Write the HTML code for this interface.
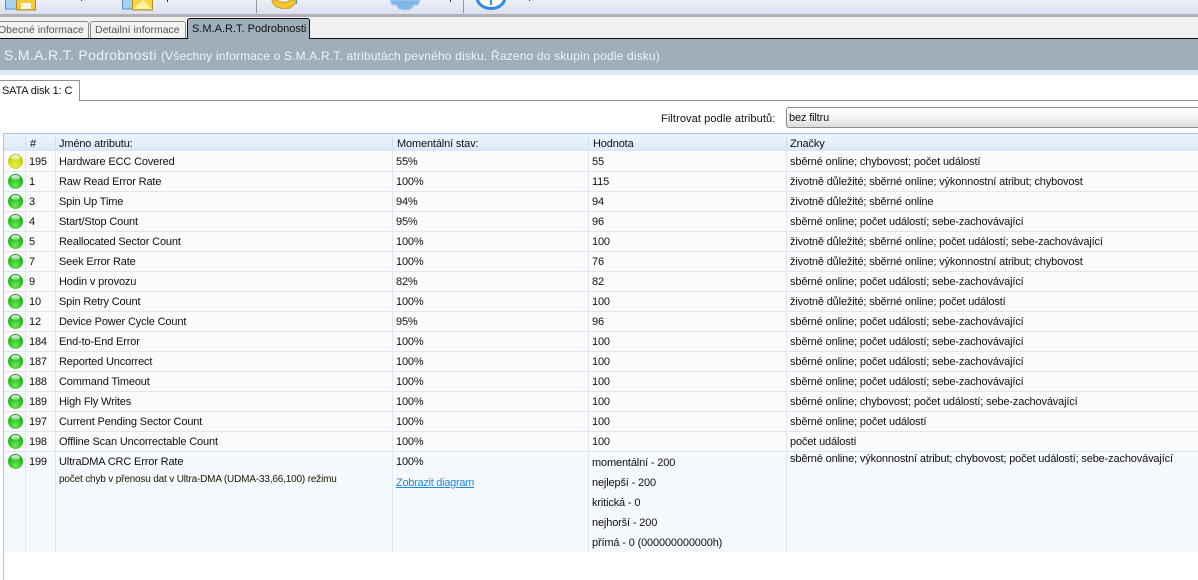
<!DOCTYPE html>
<html><head><meta charset="utf-8">
<style>
html,body{margin:0;padding:0;background:#fff}
#p{position:relative;width:1198px;height:580px;overflow:hidden;background:#fff;font-family:"Liberation Sans",sans-serif;font-size:11px;letter-spacing:-.15px;color:#111}
#p div,#p a,#p svg{position:absolute}
.t{white-space:nowrap;line-height:14px;margin-top:1px}
.r{left:4px;width:1194px;height:19px;margin-top:1px;background:#fbfbfb;border-bottom:1px solid #dde7f6}
.v{width:1px;background:#dde7f6}
.b{left:8px;width:15px;height:15px;margin-top:1px;border-radius:50%;background:radial-gradient(circle at 50% 75%,#6ce856 0%,#2cc024 50%,#159a16 80%,#108a12 100%)}
.b:after{content:"";position:absolute;left:3px;top:1px;width:9px;height:5px;border-radius:50%;background:linear-gradient(#e4f7e0,#7ad86c)}
.b.y{background:radial-gradient(circle at 50% 75%,#e6f040 0%,#ccd820 50%,#a8b414 100%)}
.b.y:after{background:linear-gradient(#f8f8dc,#dce468)}
</style></head><body><div id="p">
<div style="left:0;top:0;width:1198px;height:14px;background:linear-gradient(#eef0f8,#dbdff0)"></div>
<div style="left:0;top:14px;width:1198px;height:3px;background:#b3b1b6"></div>
<div style="left:0;top:17px;width:1198px;height:22px;background:#f0f0f0"></div>
<svg style="left:0;top:0" width="640" height="14" viewBox="0 0 640 14">
<rect x="5.5" y="-1" width="14" height="10" fill="#a8d2f2" stroke="#4f94d0"/>
<rect x="16.5" y="-1" width="19" height="11" fill="#f5c93a" stroke="#b58d20"/><rect x="21" y="3" width="10" height="6" fill="#f2f2e8"/>
<rect x="122.5" y="-1" width="10" height="10" fill="#a8d2f2" stroke="#4f94d0"/>
<rect x="132.5" y="-1" width="20" height="11" fill="#f8d445" stroke="#b58d20"/><path d="M133 9L143 0L152 9Z" fill="#fff2a8"/>
<rect x="81" y="0" width="1" height="1" fill="#334"/><rect x="167" y="0" width="1" height="2" fill="#334"/>
<rect x="256" y="0" width="1" height="13" fill="#9a9aa2"/><rect x="463" y="0" width="1" height="13" fill="#9a9aa2"/>
<path d="M272 0C272 7 282 10 290 8L296 3L296 0L290 0C288 3 280 3 277 0Z" fill="#f2c52e" stroke="#c9a224"/>
<rect x="296" y="0" width="1" height="4" fill="#4f94d0"/>
<path d="M390 0L392 5L396 5L399 9L405 10L411 9L414 5L418 5L420 0Z" fill="#7fb6ea" stroke="#a8cef2"/>
<path d="M477 -2C479 12 503 12 505 -2" fill="#fff" stroke="#2f8ae0" stroke-width="3"/><rect x="490" y="0" width="2" height="5" fill="#3b8fe0"/>
<rect x="450" y="0" width="1" height="2" fill="#334"/><rect x="529" y="0" width="1" height="1" fill="#334"/>
</svg>
<div style="left:-6px;top:21px;width:93px;height:17px;background:#f2f2f0;border:1px solid #8a8a8a;border-bottom:0;border-radius:3px 3px 0 0"></div>
<div style="left:90px;top:21px;width:94px;height:17px;background:#f2f2f0;border:1px solid #8a8a8a;border-bottom:0;border-radius:3px 3px 0 0"></div>
<div style="left:187px;top:18px;width:121px;height:21px;background:#9faebb;border:1px solid #111;border-bottom:0;border-radius:3px 3px 0 0"></div>
<div style="left:0;top:38px;width:187px;height:1px;background:#111"></div>
<div style="left:309px;top:38px;width:889px;height:1px;background:#111"></div>
<div class="t" style="left:-2px;top:22px;color:#555;font-size:10.5px;letter-spacing:0">Obecné informace</div>
<div class="t" style="left:95px;top:22px;color:#555;font-size:10.5px;letter-spacing:0">Detailní informace</div>
<div class="t" style="left:192px;top:21px;color:#111;font-size:11px;letter-spacing:0">S.M.A.R.T. Podrobnosti</div>
<div style="left:0;top:39px;width:1198px;height:31px;background:#9faebb"></div>
<div style="left:0;top:70px;width:1198px;height:5px;background:#dce8f6"></div>
<div class="t" style="left:4px;top:47px;color:#eef2f6;font-size:14px;letter-spacing:.33px">S.M.A.R.T. Podrobnosti</div>
<div class="t" style="left:161px;top:48px;color:#eef2f6;font-size:12px;letter-spacing:.17px">(Všechny informace o S.M.A.R.T. atributách pevného disku. Řazeno do skupin podle disku)</div>
<div style="left:-2px;top:80px;width:80px;height:20px;background:#fff;border:1px solid #8e939a;border-bottom:0"></div>
<div style="left:79px;top:100px;width:1119px;height:1px;background:#8e939a"></div>
<div class="t" style="left:2px;top:83px">SATA disk 1: C</div>
<div class="t" style="left:661px;top:111px;letter-spacing:.1px">Filtrovat podle atributů:</div>
<div style="left:786px;top:107px;width:412px;height:19px;border:1px solid #8a8a8a;border-right:0;border-radius:3px 0 0 3px;background:linear-gradient(#fff 0,#f6f6f6 45%,#dcdcdc 100%)"></div>
<div class="t" style="left:789px;top:110px">bez filtru</div>
<div style="left:3px;top:133px;width:1195px;height:1px;background:#9cc6ea"></div>
<div style="left:3px;top:133px;width:1px;height:447px;background:#9cc6ea"></div>
<div style="left:4px;top:134px;width:1194px;height:17px;background:linear-gradient(#ecf4fd,#e2effc 70%,#d6e6f8)"></div>
<svg style="left:14px;top:138px" width="9" height="9"><path d="M4.5 1L8 8H1Z" fill="#f2f7fd" stroke="#d8e6f6"/></svg>
<div style="left:25px;top:137px;width:1px;height:11px;background:#c8dcf2"></div>
<div style="left:55px;top:137px;width:1px;height:11px;background:#c8dcf2"></div>
<div style="left:392px;top:137px;width:1px;height:11px;background:#c8dcf2"></div>
<div style="left:588px;top:137px;width:1px;height:11px;background:#c8dcf2"></div>
<div style="left:786px;top:137px;width:1px;height:11px;background:#c8dcf2"></div>
<div class="t" style="left:30px;top:136px">#</div>
<div class="t" style="left:59px;top:136px">Jméno atributu:</div>
<div class="t" style="left:397px;top:136px">Momentální stav:</div>
<div class="t" style="left:593px;top:136px">Hodnota</div>
<div class="t" style="left:790px;top:136px">Značky</div>

<div class="r" style="top:151px"></div><div class="r" style="top:171px"></div><div class="r" style="top:191px"></div><div class="r" style="top:211px"></div><div class="r" style="top:231px"></div><div class="r" style="top:251px"></div><div class="r" style="top:271px"></div><div class="r" style="top:291px"></div><div class="r" style="top:311px"></div><div class="r" style="top:331px"></div><div class="r" style="top:351px"></div><div class="r" style="top:371px"></div><div class="r" style="top:391px"></div><div class="r" style="top:411px"></div><div class="r" style="top:431px"></div>
<div style="left:4px;top:452px;width:1194px;height:100px;background:#f5f8fd"></div>
<div class="v" style="left:25px;top:151px;height:401px"></div>
<div class="v" style="left:55px;top:151px;height:401px"></div>
<div class="v" style="left:392px;top:151px;height:401px"></div>
<div class="v" style="left:588px;top:151px;height:401px"></div>
<div class="v" style="left:786px;top:151px;height:401px"></div>

<div class="b y" style="top:153px"></div><div class="b" style="top:173px"></div><div class="b" style="top:193px"></div><div class="b" style="top:213px"></div><div class="b" style="top:233px"></div><div class="b" style="top:253px"></div><div class="b" style="top:273px"></div><div class="b" style="top:293px"></div><div class="b" style="top:313px"></div><div class="b" style="top:333px"></div><div class="b" style="top:353px"></div><div class="b" style="top:373px"></div><div class="b" style="top:393px"></div><div class="b" style="top:413px"></div><div class="b" style="top:433px"></div><div class="b" style="top:453px"></div>

<div class="t" style="left:29px;top:154px">195</div><div class="t" style="left:59px;top:154px">Hardware ECC Covered</div><div class="t" style="left:396px;top:154px">55%</div><div class="t" style="left:592px;top:154px">55</div><div class="t" style="left:790px;top:154px">sběrné online; chybovost; počet událostí</div>
<div class="t" style="left:29px;top:174px">1</div><div class="t" style="left:59px;top:174px">Raw Read Error Rate</div><div class="t" style="left:396px;top:174px">100%</div><div class="t" style="left:592px;top:174px">115</div><div class="t" style="left:790px;top:174px">životně důležité; sběrné online; výkonnostní atribut; chybovost</div>
<div class="t" style="left:29px;top:194px">3</div><div class="t" style="left:59px;top:194px">Spin Up Time</div><div class="t" style="left:396px;top:194px">94%</div><div class="t" style="left:592px;top:194px">94</div><div class="t" style="left:790px;top:194px">životně důležité; sběrné online</div>
<div class="t" style="left:29px;top:214px">4</div><div class="t" style="left:59px;top:214px">Start/Stop Count</div><div class="t" style="left:396px;top:214px">95%</div><div class="t" style="left:592px;top:214px">96</div><div class="t" style="left:790px;top:214px">sběrné online; počet událostí; sebe-zachovávající</div>
<div class="t" style="left:29px;top:234px">5</div><div class="t" style="left:59px;top:234px">Reallocated Sector Count</div><div class="t" style="left:396px;top:234px">100%</div><div class="t" style="left:592px;top:234px">100</div><div class="t" style="left:790px;top:234px">životně důležité; sběrné online; počet událostí; sebe-zachovávající</div>
<div class="t" style="left:29px;top:254px">7</div><div class="t" style="left:59px;top:254px">Seek Error Rate</div><div class="t" style="left:396px;top:254px">100%</div><div class="t" style="left:592px;top:254px">76</div><div class="t" style="left:790px;top:254px">životně důležité; sběrné online; výkonnostní atribut; chybovost</div>
<div class="t" style="left:29px;top:274px">9</div><div class="t" style="left:59px;top:274px">Hodin v provozu</div><div class="t" style="left:396px;top:274px">82%</div><div class="t" style="left:592px;top:274px">82</div><div class="t" style="left:790px;top:274px">sběrné online; počet událostí; sebe-zachovávající</div>
<div class="t" style="left:29px;top:294px">10</div><div class="t" style="left:59px;top:294px">Spin Retry Count</div><div class="t" style="left:396px;top:294px">100%</div><div class="t" style="left:592px;top:294px">100</div><div class="t" style="left:790px;top:294px">životně důležité; sběrné online; počet událostí</div>
<div class="t" style="left:29px;top:314px">12</div><div class="t" style="left:59px;top:314px">Device Power Cycle Count</div><div class="t" style="left:396px;top:314px">95%</div><div class="t" style="left:592px;top:314px">96</div><div class="t" style="left:790px;top:314px">sběrné online; počet událostí; sebe-zachovávající</div>
<div class="t" style="left:29px;top:334px">184</div><div class="t" style="left:59px;top:334px">End-to-End Error</div><div class="t" style="left:396px;top:334px">100%</div><div class="t" style="left:592px;top:334px">100</div><div class="t" style="left:790px;top:334px">sběrné online; počet událostí; sebe-zachovávající</div>
<div class="t" style="left:29px;top:354px">187</div><div class="t" style="left:59px;top:354px">Reported Uncorrect</div><div class="t" style="left:396px;top:354px">100%</div><div class="t" style="left:592px;top:354px">100</div><div class="t" style="left:790px;top:354px">sběrné online; počet událostí; sebe-zachovávající</div>
<div class="t" style="left:29px;top:374px">188</div><div class="t" style="left:59px;top:374px">Command Timeout</div><div class="t" style="left:396px;top:374px">100%</div><div class="t" style="left:592px;top:374px">100</div><div class="t" style="left:790px;top:374px">sběrné online; počet událostí; sebe-zachovávající</div>
<div class="t" style="left:29px;top:394px">189</div><div class="t" style="left:59px;top:394px">High Fly Writes</div><div class="t" style="left:396px;top:394px">100%</div><div class="t" style="left:592px;top:394px">100</div><div class="t" style="left:790px;top:394px">sběrné online; chybovost; počet událostí; sebe-zachovávající</div>
<div class="t" style="left:29px;top:414px">197</div><div class="t" style="left:59px;top:414px">Current Pending Sector Count</div><div class="t" style="left:396px;top:414px">100%</div><div class="t" style="left:592px;top:414px">100</div><div class="t" style="left:790px;top:414px">sběrné online; počet událostí</div>
<div class="t" style="left:29px;top:434px">198</div><div class="t" style="left:59px;top:434px">Offline Scan Uncorrectable Count</div><div class="t" style="left:396px;top:434px">100%</div><div class="t" style="left:592px;top:434px">100</div><div class="t" style="left:790px;top:434px">počet událostí</div>
<div class="t" style="left:29px;top:454px">199</div><div class="t" style="left:59px;top:454px">UltraDMA CRC Error Rate</div><div class="t" style="left:396px;top:454px">100%</div><div class="t" style="left:592px;top:455px">momentální - 200</div><div class="t" style="left:790px;top:451px">sběrné online; výkonnostní atribut; chybovost; počet událostí; sebe-zachovávající</div>
<div class="t" style="left:59px;top:472px;font-size:10px;color:#1a1a00;letter-spacing:-.17px">počet chyb v přenosu dat v Ultra-DMA (UDMA-33,66,100) režimu</div>
<a class="t" style="left:396px;top:475px;color:#1e88e5;text-decoration:underline;letter-spacing:-.28px">Zobrazit diagram</a>
<div class="t" style="left:592px;top:475px">nejlepší - 200</div>
<div class="t" style="left:592px;top:495px">kritická - 0</div>
<div class="t" style="left:592px;top:515px">nejhorší - 200</div>
<div class="t" style="left:592px;top:535px">přímá - 0 (000000000000h)</div>
</div></body></html>
